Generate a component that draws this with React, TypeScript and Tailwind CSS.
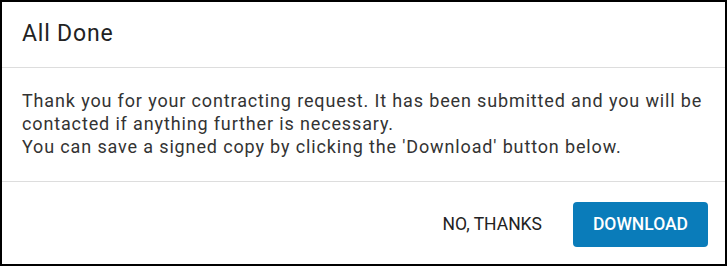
export default function App() {
  return (
    <div className="w-[727px] h-[266px] bg-white border-2 border-black flex flex-col" style={{ fontFamily: 'Roboto, "Liberation Sans", sans-serif' }}>
      <div className="h-[66px] shrink-0 flex items-center px-5 border-b border-[#dddddd]">
        <h2 className="text-[23px] tracking-[0.8px] text-[#222222] font-normal">All Done</h2>
      </div>
      <div className="h-[113px] shrink-0 px-5 pt-[21px] text-[18px] leading-[23px] tracking-[0.86px] text-[#333333]">
        <p>Thank you for your contracting request. It has been submitted and you will be contacted if anything further is necessary.</p>
        <p>You can save a signed copy by clicking the 'Download' button below.</p>
      </div>
      <div className="flex-1 border-t border-[#dddddd] flex items-start justify-end gap-[31px] pt-5 pr-[17px]">
        <button className="h-[45px] text-[17.5px] font-normal text-[#222222] uppercase">No, Thanks</button>
        <button className="w-[135px] h-[45px] rounded bg-[#0a7cba] text-white text-[17.5px] font-medium uppercase">Download</button>
      </div>
    </div>
  );
}
